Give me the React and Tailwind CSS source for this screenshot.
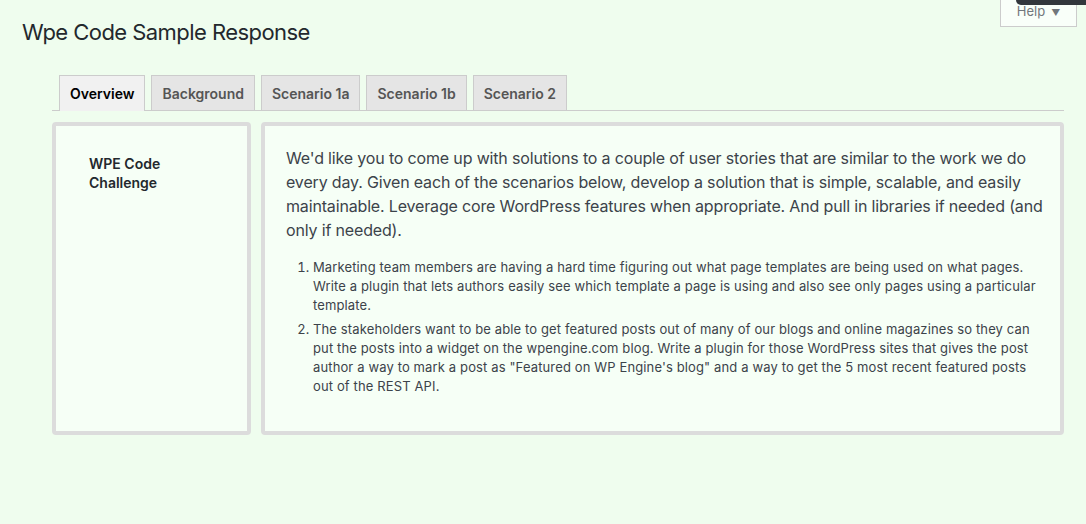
export default function App() {
  const tabs = ["Overview", "Background", "Scenario 1a", "Scenario 1b", "Scenario 2"];
  return (
    <div
      className="relative w-[1086px] h-[524px] bg-[#effdee] overflow-hidden text-[#3c434a]"
      style={{ fontFamily: 'Inter, "Noto Sans", "Liberation Sans", sans-serif' }}
    >
      <div className="absolute right-[9px] top-0 w-[77px] h-[27px] border border-[#ccc] border-t-0 bg-[#f9fff9] flex items-end justify-center pb-[5px] text-[13px] text-[#72777c]">
        <span>Help</span>
        <span className="ml-[6px] text-[9px] mb-[2px]">▼</span>
      </div>
      <div className="absolute right-0 top-0 w-[70px] h-[5px] bg-[#32373c] rounded-bl-[8px]" />

      <h1 className="pl-[22px] pt-[18px] text-[22px] leading-[29px] font-normal tracking-[-0.025em] text-[#23282d]">
        Wpe Code Sample Response
      </h1>

      <div className="ml-[52px] w-[1012px] mt-[28px]">
        <div className="flex gap-[6px] pl-[7px] border-b border-[#ccc] h-[36px]">
          {tabs.map((t, i) => (
            <div
              key={t}
              className={
                i === 0
                  ? "h-[36px] px-[10px] flex items-center border border-[#ccc] border-b-0 bg-[#f1f1f1] text-black text-[14px] font-semibold -mb-px"
                  : "h-[35px] px-[10px] flex items-center border border-[#ccc] border-b-0 bg-[#e5e5e5] text-[#555] text-[14px] font-semibold"
              }
            >
              {t}
            </div>
          ))}
        </div>

        <div className="flex gap-[10px] mt-[11px]">
          <div className="w-[199px] h-[313px] border-4 border-[#dcdcdc] rounded-[4px] bg-[#f6fff6] pl-[33px] pt-[28px]">
            <div className="w-[120px] text-[14px] leading-[19px] font-semibold text-[#23282d]">
              WPE Code Challenge
            </div>
          </div>
          <div className="flex-1 h-[313px] border-4 border-[#dcdcdc] rounded-[4px] bg-[#f6fff6] pl-[21px] pr-[20px] pt-[20px]">
            <p className="text-[16px] leading-[24px] tracking-[-0.01em] mr-[-10px] text-[#3c434a]">
              We'd like you to come up with solutions to a couple of user stories that are similar to the work we do
              every day. Given each of the scenarios below, develop a solution that is simple, scalable, and easily
              maintainable. Leverage core WordPress features when appropriate. And pull in libraries if needed (and
              only if needed).
            </p>
            <ol className="list-decimal ml-[27px] mt-[16px] text-[13px] leading-[19px] tracking-[0.01em] text-[#3c434a]">
              <li className="mb-[5px] pl-0">
                Marketing team members are having a hard time figuring out what page templates are being used on what
                pages. Write a plugin that lets authors easily see which template a page is using and also see only
                pages using a particular template.
              </li>
              <li className="mb-[5px]">
                The stakeholders want to be able to get featured posts out of many of our blogs and online magazines so
                they can put the posts into a widget on the wpengine.com blog. Write a plugin for those WordPress sites
                that gives the post author a way to mark a post as "Featured on WP Engine's blog" and a way to get the 5
                most recent featured posts out of the REST API.
              </li>
            </ol>
          </div>
        </div>
      </div>
    </div>
  );
}
